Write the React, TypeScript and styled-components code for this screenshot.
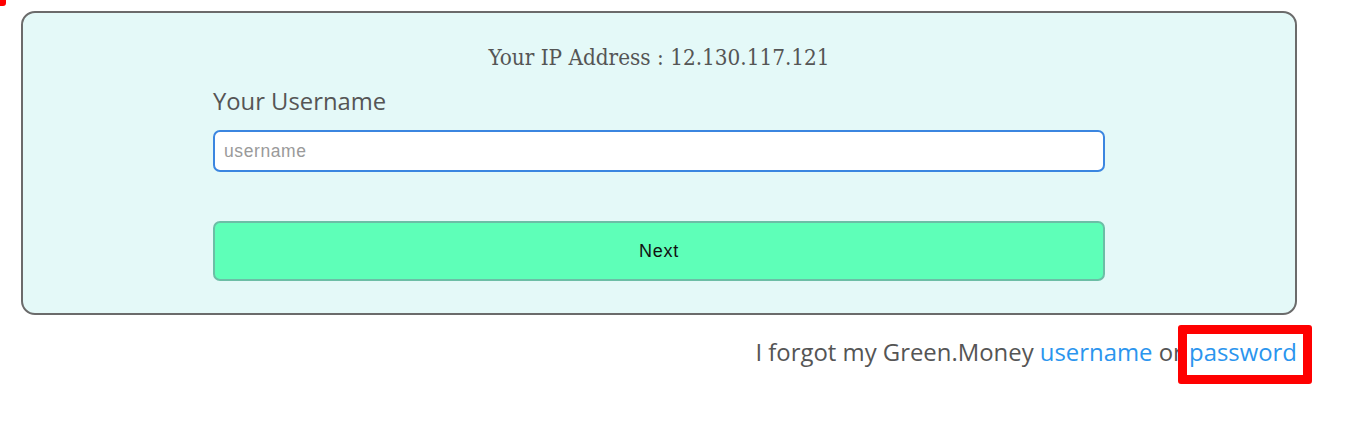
import React from "react";
import styled, { createGlobalStyle } from "styled-components";

const Global = createGlobalStyle`
  html, body { margin: 0; padding: 0; background: #ffffff; }
  body { font-family: "Open Sans", "Noto Sans", sans-serif; }
  * { box-sizing: border-box; }
`;

const Page = styled.div`
  position: relative;
  padding: 11px 51px 0 21px;
  width: 1348px;
  height: 430px;
  overflow: hidden;
`;

const CornerMark = styled.div`
  position: absolute;
  top: -50px;
  left: -50px;
  width: 56px;
  height: 56px;
  border: 8px solid #ff0000;
  border-radius: 3px;
`;

const Card = styled.div`
  border: 2px solid #6b6b6b;
  border-radius: 14px;
  background: #e4f9f8;
  padding: 29px 0 32px;
  display: flex;
  flex-direction: column;
  align-items: center;
`;

const IpLine = styled.div`
  font-family: "DejaVu Serif", "Liberation Serif", serif;
  font-stretch: condensed;
  font-size: 22.3px;
  line-height: 30px;
  color: #555555;
  text-align: center;
`;

const Column = styled.div`
  width: 892px;
  display: flex;
  flex-direction: column;
  margin-top: 14px;
`;

const Label = styled.label`
  font-family: "Open Sans", sans-serif;
  font-size: 23.8px;
  line-height: 30px;
  color: #555555;
`;

const Input = styled.input`
  margin-top: 14px;
  height: 42px;
  border: 2px solid #3b86e0;
  border-radius: 7px;
  background: #ffffff;
  padding: 0 9px;
  font-family: "Liberation Sans", Arial, sans-serif;
  font-size: 17.5px;
  letter-spacing: 0.6px;
  color: #333;
  outline: none;
  &::placeholder { color: #9a9a9a; }
`;

const NextButton = styled.button`
  margin-top: 49px;
  height: 60px;
  padding-top: 2px;
  border: 2px solid #6cbea6;
  border-radius: 7px;
  background: #5effb8;
  font-family: "Liberation Sans", Arial, sans-serif;
  font-size: 18px;
  letter-spacing: 0.8px;
  color: #111111;
  cursor: pointer;
`;

const Footer = styled.div`
  margin-top: 22px;
  text-align: right;
  font-family: "Open Sans", sans-serif;
  font-size: 23.9px;
  line-height: 30px;
  color: #555555;
`;

const Link = styled.a`
  color: #2b95ee;
  text-decoration: none;
`;

const Highlighted = styled.span`
  position: relative;
`;

const RedBox = styled.span`
  position: absolute;
  top: -10px;
  bottom: -16px;
  left: -11px;
  right: -15px;
  border: 9px solid #ff0000;
  border-radius: 3px;
  pointer-events: none;
`;

export default function App() {
  return (
    <>
      <Global />
      <Page>
        <CornerMark />
        <Card>
          <IpLine>Your IP Address : 12.130.117.121</IpLine>
          <Column>
            <Label htmlFor="username">Your Username</Label>
            <Input id="username" placeholder="username" />
            <NextButton type="button">Next</NextButton>
          </Column>
        </Card>
        <Footer>
          I forgot my Green.Money <Link href="#">username</Link> or{" "}
          <Highlighted>
            <Link href="#">password</Link>
            <RedBox />
          </Highlighted>
        </Footer>
      </Page>
    </>
  );
}
